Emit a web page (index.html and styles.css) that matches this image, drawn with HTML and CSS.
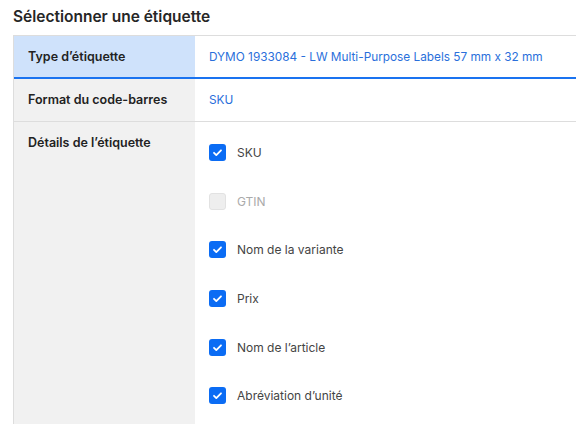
FILE: index.html
```html
<!DOCTYPE html>
<html lang="fr">
<head>
  <meta charset="UTF-8">
  <title>Sélectionner une étiquette</title>
  <link rel="stylesheet" href="styles.css">
</head>
<body>

  <h2 class="title">Sélectionner une étiquette</h2>

  <div class="table">
    <div class="row active">
      <div class="label">Type d’étiquette</div>
      <div class="value link">DYMO 1933084 - LW Multi-Purpose Labels 57 mm x 32 mm</div>
    </div>
    <div class="row format">
      <div class="label">Format du code-barres</div>
      <div class="value link">SKU</div>
    </div>
    <div class="row details">
      <div class="label">Détails de l’étiquette</div>
      <ul class="checks">
        <li class="check on"><span class="box"></span>SKU</li>
        <li class="check off"><span class="box"></span>GTIN</li>
        <li class="check on"><span class="box"></span>Nom de la variante</li>
        <li class="check on"><span class="box"></span>Prix</li>
        <li class="check on"><span class="box"></span>Nom de l’article</li>
        <li class="check on"><span class="box"></span>Abréviation d’unité</li>
      </ul>
    </div>
  </div>

</body>
</html>
```

FILE: styles.css
```css
body {
  margin: 0;
  font-family: Inter, "Noto Sans", sans-serif;
  color: #222;
  background: #fff;
}
.title {
  margin: 0;
  padding: 8px 13px 9px;
  font-size: 15.5px;
  font-weight: 600;
  line-height: 18px;
  color: #262626;
}
.table {
  margin-left: 13px;
  border-top: 1px solid #ddd;
  border-left: 1px solid #ddd;
}
.row {
  display: flex;
  border-bottom: 1px solid #ddd;
}
.row.active {
  border-bottom: 2px solid #1a73f0;
}
.label {
  width: 167px;
  flex-shrink: 0;
  padding: 13px 0 12px 14px;
  background: #f1f1f1;
  font-size: 12.5px;
  font-weight: 600;
  line-height: 16px;
  color: #222;
}
.row.format .label {
  padding-bottom: 13px;
}
.row.active .label {
  background: #cfe2fb;
}
.value {
  padding: 13px 14px 12px;
  font-size: 11.8px;
  line-height: 16px;
  white-space: nowrap;
}
.link {
  color: #2a6fdb;
}
.row.details {
  border-bottom: none;
}
.checks {
  list-style: none;
  margin: 0;
  padding: 6px 0 12px 14px;
}
.check {
  display: flex;
  align-items: center;
  height: 48.7px;
  font-size: 12px;
  color: #444;
}
.box {
  width: 17px;
  height: 17px;
  border-radius: 3px;
  margin-right: 11px;
  box-sizing: border-box;
}
.check.on .box {
  background: #0b6cf4 url("data:image/svg+xml,%3Csvg xmlns='http://www.w3.org/2000/svg' viewBox='0 0 17 17'%3E%3Cpath d='M5 8.8l2.3 2.3 4.7-4.8' fill='none' stroke='white' stroke-width='1.8' stroke-linecap='round' stroke-linejoin='round'/%3E%3C/svg%3E") center/17px no-repeat;
}
.check.off {
  color: #aaa;
}
.check.off .box {
  background: #eee;
  border: 1px solid #e2e2e2;
}
```
